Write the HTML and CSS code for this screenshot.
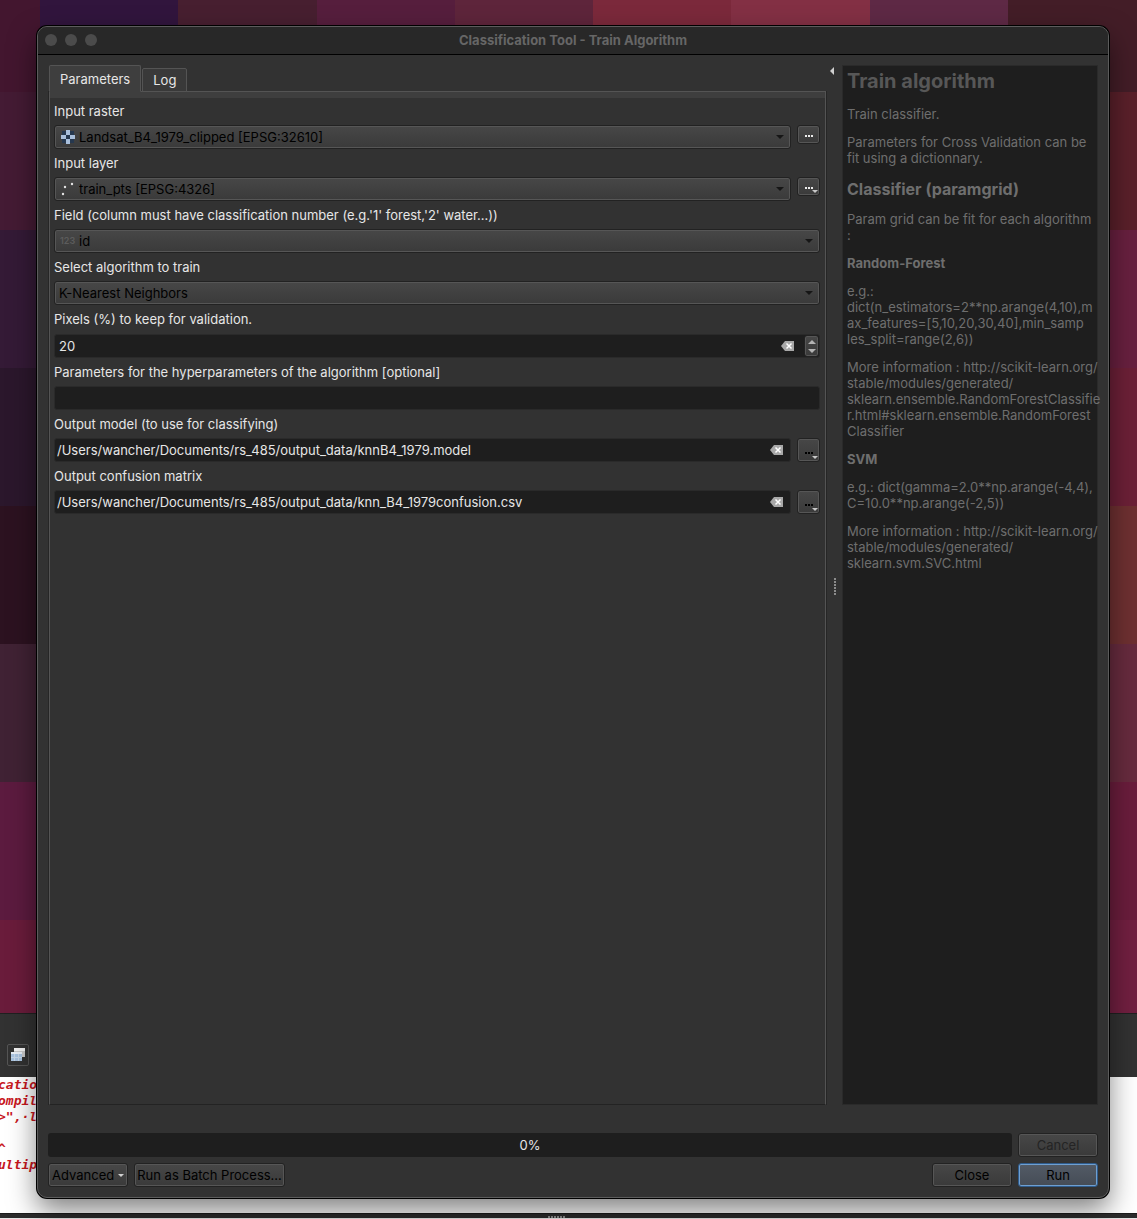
FILE: index.html
```html
<!DOCTYPE html>
<html lang="en">
<head>
<meta charset="utf-8">
<meta name="viewport" content="width=device-width, initial-scale=1">
<title>Classification Tool - Train Algorithm</title>
<link rel="stylesheet" href="styles.css">
</head>
<body>
<div class="screen">
  <div class="backdrop">
    <div class="raster" aria-hidden="true">
      <i class="t1"></i><i class="t2"></i><i class="t3"></i><i class="t4"></i><i class="t5"></i><i class="t6"></i><i class="t7"></i><i class="t8"></i><i class="t9"></i>
      <i class="west w1"></i><i class="east e1"></i>
      <i class="west w2"></i><i class="east e2"></i>
      <i class="west w3"></i><i class="east e3"></i>
      <i class="west w4"></i><i class="east e4"></i>
      <i class="west w5"></i><i class="east e5"></i>
      <i class="west w6"></i><i class="east e6"></i>
      <i class="west w7"></i><i class="east e7"></i>
    </div>
    <div class="strip">
      <button class="strip-button" type="button" aria-label="Dock console">
        <svg width="16" height="16" viewBox="0 0 16 16"><rect x="4" y="1" width="11" height="9" fill="#c9c9c9"/><rect x="4" y="1" width="11" height="3" fill="#f2f2f2"/><rect x="1" y="5" width="11" height="9" fill="#a9c3df"/><rect x="1" y="5" width="11" height="2" fill="#e9eff6"/><path d="M1 10.500h11M4.500 7v7M8.500 7v7" stroke="#c6d7e9"/></svg>
      </button>
    </div>
    <pre class="console">catio
ompil
&gt;",·l

^
ultip</pre>
    <div class="grip-bar"><svg width="18" height="3" viewBox="0 0 18 3"><path d="M0 1h18" stroke="#8c8c8c" stroke-width="2" stroke-dasharray="2 1"/></svg></div>
  </div>

  <main class="dialog">
    <header class="titlebar">
      <div class="lights"><i></i><i></i><i></i></div>
      <h1>Classification Tool - Train Algorithm</h1>
    </header>
    <div class="content">
      <div class="panes">
        <section class="left">
          <div class="tabs" role="tablist">
            <button class="tab active" type="button" role="tab" aria-selected="true">Parameters</button>
            <button class="tab" type="button" role="tab" aria-selected="false">Log</button>
          </div>
          <form class="form">
            <div class="field">
              <label for="raster">Input raster</label>
              <div class="row">
                <div class="combo with-icon">
                  <svg class="combo-icon" width="14" height="14" viewBox="0 0 14 14"><rect x="1" y="1" width="12" height="12" fill="#26384f"/><path d="M5 0h4v5h5v4H9v5H5V9H0V5h5z" fill="#a9bfdb"/><path d="M5 5h4v4H5z" fill="#26384f"/></svg>
                  <select id="raster"><option>Landsat_B4_1979_clipped [EPSG:32610]</option></select>
                </div>
                <button class="btn more" type="button" aria-label="Browse raster"><svg width="8" height="2" viewBox="0 0 8 2"><path d="M0 1h8" stroke="#ececec" stroke-width="2" stroke-dasharray="2 1"/></svg></button>
              </div>
            </div>
            <div class="field">
              <label for="layer">Input layer</label>
              <div class="row">
                <div class="combo with-icon">
                  <svg class="combo-icon" width="14" height="14" viewBox="0 0 14 14"><circle cx="2" cy="12" r="1.200" fill="#e4e4e4"/><circle cx="4" cy="5" r="1.200" fill="#e4e4e4"/><circle cx="11" cy="2" r="1.200" fill="#e4e4e4"/></svg>
                  <select id="layer"><option>train_pts [EPSG:4326]</option></select>
                </div>
                <button class="btn more menu" type="button" aria-label="Browse layer"><svg width="8" height="2" viewBox="0 0 8 2"><path d="M0 1h8" stroke="#ececec" stroke-width="2" stroke-dasharray="2 1"/></svg></button>
              </div>
            </div>
            <div class="field">
              <label for="column">Field (column must have classification number (e.g.'1' forest,'2' water...))</label>
              <div class="combo with-icon">
                <span class="combo-icon digits">123</span>
                <select id="column"><option>id</option></select>
              </div>
            </div>
            <div class="field">
              <label for="algorithm">Select algorithm to train</label>
              <div class="combo"><select id="algorithm"><option>K-Nearest Neighbors</option></select></div>
            </div>
            <div class="field">
              <label for="pixels">Pixels (%) to keep for validation.</label>
              <div class="box spin">
                <input id="pixels" type="number" value="20">
                <button class="clear" type="button" aria-label="Clear"><svg width="13" height="10" viewBox="0 0 13 10"><path d="M4 0h9v10H4L0 5z" fill="#a8a8a8"/><path d="M5.500 2.500l5 5M10.500 2.500l-5 5" stroke="#fff" stroke-width="1.500"/></svg></button>
                <div class="stepper">
                  <button type="button" aria-label="Increase"><svg width="8" height="4" viewBox="0 0 8 4"><path d="M0 4l4-4 4 4z" fill="#b4b4b4"/></svg></button>
                  <button type="button" aria-label="Decrease"><svg width="8" height="4" viewBox="0 0 8 4"><path d="M0 0h8L4 4z" fill="#b4b4b4"/></svg></button>
                </div>
              </div>
            </div>
            <div class="field">
              <label for="hyper">Parameters for the hyperparameters of the algorithm [optional]</label>
              <div class="box"><input id="hyper" type="text"></div>
            </div>
            <div class="field">
              <label for="model">Output model (to use for classifying)</label>
              <div class="row">
                <div class="box">
                  <input id="model" type="text" value="/Users/wancher/Documents/rs_485/output_data/knnB4_1979.model">
                  <button class="clear" type="button" aria-label="Clear"><svg width="13" height="10" viewBox="0 0 13 10"><path d="M4 0h9v10H4L0 5z" fill="#a8a8a8"/><path d="M5.500 2.500l5 5M10.500 2.500l-5 5" stroke="#fff" stroke-width="1.500"/></svg></button>
                </div>
                <button class="btn more tall menu" type="button" aria-label="Browse model"><svg width="8" height="2" viewBox="0 0 8 2"><path d="M0 1h8" stroke="#000" stroke-width="2" stroke-dasharray="2 1"/></svg></button>
              </div>
            </div>
            <div class="field">
              <label for="matrix">Output confusion matrix</label>
              <div class="row">
                <div class="box">
                  <input id="matrix" type="text" value="/Users/wancher/Documents/rs_485/output_data/knn_B4_1979confusion.csv">
                  <button class="clear" type="button" aria-label="Clear"><svg width="13" height="10" viewBox="0 0 13 10"><path d="M4 0h9v10H4L0 5z" fill="#a8a8a8"/><path d="M5.500 2.500l5 5M10.500 2.500l-5 5" stroke="#fff" stroke-width="1.500"/></svg></button>
                </div>
                <button class="btn more tall menu" type="button" aria-label="Browse matrix"><svg width="8" height="2" viewBox="0 0 8 2"><path d="M0 1h8" stroke="#000" stroke-width="2" stroke-dasharray="2 1"/></svg></button>
              </div>
            </div>
          </form>
        </section>
        <div class="splitter">
          <svg class="collapse" width="4" height="8" viewBox="0 0 4 8"><path d="M4 0v8L0 4z" fill="#d0d0d0"/></svg>
          <svg class="handle" width="2" height="17" viewBox="0 0 2 17"><path d="M1 0v17" stroke="#8c8c8c" stroke-width="2" stroke-dasharray="2 1"/></svg>
        </div>
        <aside class="help">
          <h2>Train algorithm</h2>
          <p>Train classifier.</p>
          <p>Parameters for Cross Validation can be<br>fit using a dictionnary.</p>
          <h3>Classifier (paramgrid)</h3>
          <p>Param grid can be fit for each algorithm<br>:</p>
          <h4>Random-Forest</h4>
          <p>e.g.:<br>dict(n_estimators=2**np.arange(4,10),m<br>ax_features=[5,10,20,30,40],min_samp<br>les_split=range(2,6))</p>
          <p>More information : http://scikit-learn.org/<br>stable/modules/generated/<br>sklearn.ensemble.RandomForestClassifie<br>r.html#sklearn.ensemble.RandomForest<br>Classifier</p>
          <h4>SVM</h4>
          <p>e.g.: dict(gamma=2.0**np.arange(-4,4),<br>C=10.0**np.arange(-2,5))</p>
          <p>More information : http://scikit-learn.org/<br>stable/modules/generated/<br>sklearn.svm.SVC.html</p>
        </aside>
      </div>
      <footer class="footer">
        <div class="footer-row">
          <div class="progress" role="progressbar" aria-valuenow="0" aria-valuemin="0" aria-valuemax="100">0%</div>
          <button class="btn action" type="button" disabled>Cancel</button>
        </div>
        <div class="footer-row">
          <button class="btn advanced" type="button">Advanced <svg width="6" height="3" viewBox="0 0 6 3"><path d="M0 0h6L3 3z" fill="#d0d0d0"/></svg></button>
          <button class="btn batch" type="button">Run as Batch Process...</button>
          <button class="btn action close" type="button">Close</button>
          <button class="btn action primary" type="button">Run</button>
        </div>
      </footer>
    </div>
  </main>
</div>
</body>
</html>
```
FILE: styles.css
```css
* { box-sizing: border-box; }

body {
  margin: 0;
  font: 13px/16px Inter, "Liberation Sans", sans-serif;
  color: #e6e6e6;
  background: #323232;
}

button, input, select {
  font: inherit;
  color: inherit;
  margin: 0;
  padding: 0;
  border: 0;
  background: none;
}

svg { display: block; }

.screen {
  display: grid;
  min-height: 100vh;
}

.backdrop, .dialog { grid-area: 1 / 1; }

/* Map canvas and console behind the dialog */
.backdrop {
  display: flex;
  flex-direction: column;
  min-width: 0;
}

.raster {
  flex: 1;
  display: grid;
  grid-template-columns: 40px repeat(7, minmax(0, 138fr)) minmax(0, 129fr);
  grid-template-rows: 92px repeat(6, minmax(0, 138fr)) minmax(0, 93fr);
}

.west { grid-column: 1; }
.east { grid-column: 9; }
.t1 { background: #43162f; }
.t2 { background: #31153d; }
.t3 { background: #471f30; }
.t4 { background: #561e3d; }
.t5 { background: #5e253b; }
.t6 { background: #7b293b; }
.t7 { background: #833044; }
.t8 { background: #5e2945; }
.t9 { background: #431d27; }
.w1 { background: #441b34; }
.w2 { background: #341a36; }
.w3 { background: #2b172c; }
.w4 { background: #2c1220; }
.w5 { background: #402234; }
.w6 { background: #5c1b3f; }
.w7 { background: #6a1c3b; }
.e1 { background: #5a202a; }
.e2 { background: #68203f; }
.e3 { background: #6c2037; }
.e4 { background: #6e3031; }
.e5 { background: #672b3e; }
.e6 { background: #6a1d3c; }
.e7 { background: #711f40; }

.strip {
  display: flex;
  align-items: center;
  height: 64px;
  padding: 18px 7px 0;
  background: #323232;
  border-top: 1px solid #202020;
}

.strip-button {
  display: grid;
  place-items: center;
  width: 22px;
  height: 22px;
  border: 1px solid #555;
  border-radius: 2px;
}

.console {
  height: 136px;
  margin: 0 0 0 -2px;
  overflow: hidden;
  background: #fff;
  color: #c8171e;
  font: italic bold 13px/16px "DejaVu Sans Mono", monospace;
}

.grip-bar {
  display: flex;
  justify-content: center;
  height: 6px;
  padding: 2px 24px 0 0;
  background: #2c2c2c;
  border-top: 1px solid #1c1c1c;
  border-bottom: 1px solid #e8e8e8;
}

/* Dialog */
.dialog {
  display: flex;
  flex-direction: column;
  min-width: 0;
  margin: 26px 28px 21px 37px;
  overflow: hidden;
  background: #323232;
  border: 1px solid #5c5c5c;
  border-radius: 10px;
  box-shadow: 0 0 0 1px #000, 0 12px 28px rgba(0, 0, 0, .5);
}

.titlebar {
  display: grid;
  grid-template-columns: 1fr auto 1fr;
  align-items: center;
  height: 28px;
  padding: 0 7px 2px;
  background: #282828;
  border-bottom: 1px solid #000;
}

.lights { display: flex; gap: 8px; }
.lights i { width: 12px; height: 12px; border-radius: 50%; background: #4b4b4b; }

h1, h2, h3, h4, p { margin: 0; }
h1 { font-size: 13px; line-height: 16px; font-weight: 700; color: #666; }

.content {
  flex: 1;
  display: flex;
  flex-direction: column;
  padding: 10px;
}

.panes { flex: 1; display: flex; }

.left {
  flex: 1;
  display: flex;
  flex-direction: column;
  min-width: 0;
  padding-left: 1px;
}

.tabs {
  display: flex;
  align-items: flex-end;
  gap: 1px;
  height: 27px;
  margin-bottom: -1px;
}

.tab {
  position: relative;
  height: 24px;
  padding: 0 10px;
  background: #393939;
  border: 1px solid #545454;
  border-radius: 2px 2px 0 0;
}

.tab.active {
  height: 27px;
  background: #3e3e3e;
  border-bottom-color: #3e3e3e;
}

.form {
  flex: 1;
  display: flex;
  flex-direction: column;
  gap: 6px;
  padding: 11px 5px 11px 4px;
  border: 1px solid #545454;
  border-bottom-color: #232323;
  background: linear-gradient(#3e3e3e 6px, transparent 6px);
  box-shadow: -1px 0 #262626, 1px 0 #262626;
}

.field { display: flex; flex-direction: column; gap: 6px; }
.field label { white-space: nowrap; }

.row { display: flex; align-items: flex-start; gap: 6px; }
.row .combo, .row .box { flex: 1; min-width: 0; }

.combo { position: relative; height: 24px; color: #000; }

.combo select, .btn, .stepper {
  background: linear-gradient(#474747, #3a3a3a);
  border: 1px solid #222;
  border-radius: 3px;
  box-shadow: inset 0 0 0 1px #565656;
}

.combo select {
  appearance: none;
  width: 100%;
  height: 24px;
  padding: 0 24px 0 4px;
}

.combo.with-icon select { padding-left: 24px; }

.combo::after {
  content: "";
  position: absolute;
  right: 7px;
  top: 10px;
  border: 4px solid transparent;
  border-top-color: #161616;
  border-bottom: 0;
}

.combo-icon { position: absolute; left: 7px; top: 5px; }
.digits { left: 6px; font-size: 9px; line-height: 13px; font-weight: 600; color: #5c5c5c; }

.btn { color: #000; text-align: center; white-space: nowrap; }

.more {
  position: relative;
  display: grid;
  place-items: center;
  width: 23px;
  height: 19px;
  padding-top: 3px;
}

.more.tall { height: 24px; padding-top: 5px; }

.more.menu::after {
  content: "";
  position: absolute;
  right: 1px;
  bottom: 2px;
  border: 3px solid transparent;
  border-top-color: #c8c8c8;
  border-bottom: 0;
}

.box {
  display: flex;
  align-items: center;
  height: 24px;
  background: #1e1e1e;
  border: 1px solid #2a2a2a;
  border-radius: 3px;
}

.box input {
  flex: 1;
  min-width: 0;
  height: 22px;
  padding-left: 2px;
  outline: 0;
  appearance: textfield;
}

.box input::-webkit-inner-spin-button { appearance: none; }
.spin { margin-top: 1px; }
.spin input { padding-left: 4px; }
.clear { margin-right: 7px; }
.spin .clear { margin-right: 10px; }

.stepper {
  display: flex;
  flex-direction: column;
  justify-content: center;
  align-items: center;
  gap: 5px;
  width: 15px;
  height: 22px;
}

.splitter {
  display: flex;
  flex-direction: column;
  width: 16px;
  padding: 2px 6px 8px 4px;
}

.handle { align-self: flex-end; margin: auto 0; }

.help {
  width: 256px;
  padding: 3px 4px;
  white-space: nowrap;
  background: #1e1e1e;
  border: 1px solid #2a2a2a;
  color: #6e6e6e;
}

.help p, .help h4 { margin-top: 12px; }
.help h2 { margin-bottom: 13px; font-size: 20px; line-height: 24px; font-weight: 700; color: #575757; }
.help h3 { margin-top: 13px; font-size: 16px; line-height: 20px; font-weight: 700; }
.help h4 { font-size: 13px; line-height: 16px; font-weight: 700; }

.footer {
  display: flex;
  flex-direction: column;
  gap: 6px;
  margin-top: 28px;
}

.footer-row { display: flex; gap: 6px; }

.progress {
  flex: 1;
  height: 24px;
  line-height: 24px;
  text-align: center;
  background: #1e1e1e;
  border-radius: 3px;
}

.footer .btn { height: 24px; }
.action { width: 80px; }
.action:disabled { color: #242424; }
.advanced { display: flex; align-items: center; gap: 4px; padding: 0 3px; }
.batch { padding: 0 2px; }
.close { margin-left: auto; }

.footer .primary {
  background: linear-gradient(#535b66, #454c56);
  border-color: #2f5c8d;
  box-shadow: inset 0 0 0 1px #6f9fd0;
}
```
